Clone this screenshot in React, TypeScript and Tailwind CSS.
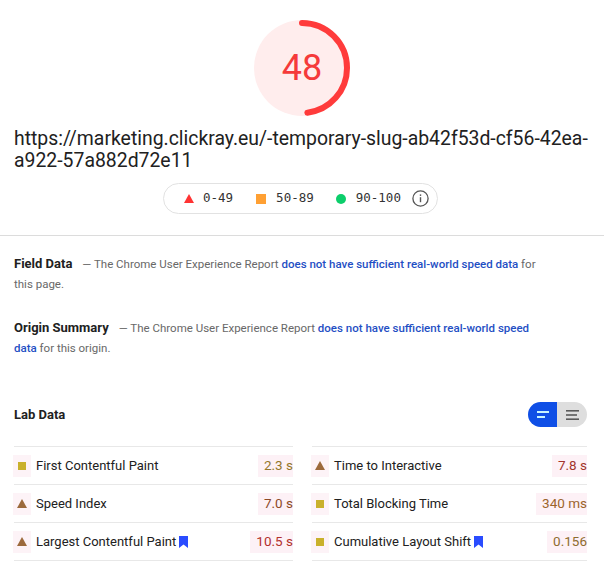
import React from 'react';

const mono = { fontFamily: '"DejaVu Sans Mono", "Liberation Mono", monospace' };

type Metric = {
    name: string;
    value: string;
    icon: 'square' | 'triangle';
    valueColor: string;
    flag?: boolean;
};

const links = 'text-[#1f4fc4] font-medium';

const Gauge: React.FC = () => {
    const r = 45;
    const c = 2 * Math.PI * r;
    const len = c * 0.48;
    return (
        <div className="relative w-[96px] h-[96px]">
            <svg width="96" height="96" viewBox="0 0 96 96">
                <circle cx="48" cy="48" r="48" fill="#ffeded" />
                <circle
                    cx="48"
                    cy="48"
                    r={r}
                    fill="none"
                    stroke="#ff3b3b"
                    strokeWidth="6"
                    strokeLinecap="round"
                    strokeDasharray={`${len} ${c}`}
                    transform="rotate(-90 48 48)"
                />
            </svg>
            <div className="absolute inset-0 flex items-center justify-center text-[36px] text-[#f53a3a]">48</div>
        </div>
    );
};

const Bookmark: React.FC = () => (
    <svg width="9" height="12" viewBox="0 0 9 12" className="ml-[3px] shrink-0">
        <path d="M0 0h9v12L4.5 8.6 0 12z" fill="#2a4cff" />
    </svg>
);

const MetricRow: React.FC<{ m: Metric }> = ({ m }) => (
    <div className="h-[38px] border-b border-[#e8e8e8] flex items-center">
        <div className="w-[18px] h-[22px] flex items-center justify-center bg-[#fdf3f7] ml-[-1px]">
            {m.icon === 'square' ? (
                <div className="w-[8px] h-[8px] bg-[#c9b12c]" />
            ) : (
                <svg width="10" height="9" viewBox="0 0 10 9">
                    <path d="M5 0L10 9H0z" fill="#9c6a3c" />
                </svg>
            )}
        </div>
        <span className="ml-[5px] text-[13px] text-[#212121]">{m.name}</span>
        {m.flag && <Bookmark />}
        <span
            className="ml-auto h-[22px] pl-[6px] flex items-center bg-[#fdf1f6] text-[13.5px]"
            style={{ color: m.valueColor }}
        >
            {m.value}
        </span>
    </div>
);

export default function App() {
    const left: Metric[] = [
        { name: 'First Contentful Paint', value: '2.3 s', icon: 'square', valueColor: '#94762c' },
        { name: 'Speed Index', value: '7.0 s', icon: 'triangle', valueColor: '#8d4a26' },
        { name: 'Largest Contentful Paint', value: '10.5 s', icon: 'triangle', valueColor: '#b2302c', flag: true },
    ];
    const right: Metric[] = [
        { name: 'Time to Interactive', value: '7.8 s', icon: 'triangle', valueColor: '#a3352c' },
        { name: 'Total Blocking Time', value: '340 ms', icon: 'square', valueColor: '#9c642c' },
        { name: 'Cumulative Layout Shift', value: '0.156', icon: 'square', valueColor: '#8e6c2e', flag: true },
    ];

    return (
        <div className="w-[604px] h-[562px] overflow-hidden bg-white" style={{ fontFamily: 'Roboto, "Noto Sans", sans-serif' }}>
            <div className="pt-[20px] flex justify-center">
                <Gauge />
            </div>
            <div className="px-[14px] mt-[12px] text-[19.4px] leading-[22px] text-[#212121]">
                https://marketing.clickray.eu/-temporary-slug-ab42f53d-cf56-42ea-a922-57a882d72e11
            </div>
            <div className="flex mt-[11px] pl-[163px]">
                <div className="flex items-center h-[31px] pl-[20px] pr-[8px] border border-[#e2e2e2] rounded-full text-[12.5px] text-[#333]" style={mono}>
                    <svg width="10" height="9" viewBox="0 0 10 9">
                        <path d="M5 0L10 9H0z" fill="#ff3333" />
                    </svg>
                    <span className="ml-[9px]">0-49</span>
                    <span className="ml-[23px] w-[10px] h-[10px] bg-[#ffa033]" />
                    <span className="ml-[10px]">50-89</span>
                    <span className="ml-[22px] w-[10px] h-[10px] rounded-full bg-[#0cce6b]" />
                    <span className="ml-[10px]">90-100</span>
                    <svg width="17" height="17" viewBox="0 0 17 17" className="ml-[11px]">
                        <circle cx="8.5" cy="8.5" r="7.6" fill="none" stroke="#555" strokeWidth="1.3" />
                        <rect x="7.8" y="7.2" width="1.4" height="5" fill="#555" />
                        <rect x="7.8" y="4.4" width="1.4" height="1.5" fill="#555" />
                    </svg>
                </div>
            </div>
            <div className="mt-[21px] border-t border-[#dcdcdc]" />

            <div className="px-[14px] pt-[18px]">
                <p className="w-[532px] text-[11.5px] leading-[20px] text-[#686868]">
                    <span className="text-[13px] font-bold text-[#212121] mr-[10px]">Field Data</span>
                    — The Chrome User Experience Report{' '}
                    <span className={links}>does not have sufficient real-world speed data</span> for this page.
                </p>
                <p className="w-[532px] mt-[24px] text-[11.5px] leading-[20px] text-[#686868]">
                    <span className="text-[13px] font-bold text-[#212121] mr-[10px]">Origin Summary</span>
                    — The Chrome User Experience Report{' '}
                    <span className={links}>does not have sufficient real-world speed data</span> for this origin.
                </p>

                <div className="flex items-center justify-between mt-[44px] pr-[3px]">
                    <span className="text-[13px] font-bold text-[#212121]">Lab Data</span>
                    <div className="flex h-[25px] rounded-full overflow-hidden">
                        <div className="w-[29px] bg-[#0f4fe6] flex items-center justify-center">
                            <svg width="12" height="7" viewBox="0 0 12 7">
                                <rect x="0" y="0" width="12" height="2" fill="#c8f4ff" />
                                <rect x="0" y="5" width="8" height="2" fill="#c8f4ff" />
                            </svg>
                        </div>
                        <div className="w-[30px] bg-[#dedede] flex items-center justify-center">
                            <svg width="13" height="10" viewBox="0 0 13 10">
                                <rect x="0" y="0" width="13" height="1.6" fill="#5a5a5a" />
                                <rect x="0" y="4.2" width="11" height="1.6" fill="#5a5a5a" />
                                <rect x="0" y="8.4" width="13" height="1.6" fill="#5a5a5a" />
                            </svg>
                        </div>
                    </div>
                </div>

                <div className="grid grid-cols-[279px_275px] gap-x-[19px] mt-[19px]">
                    <div className="border-t border-[#e8e8e8]">
                        {left.map((m) => (
                            <MetricRow key={m.name} m={m} />
                        ))}
                    </div>
                    <div className="border-t border-[#e8e8e8]">
                        {right.map((m) => (
                            <MetricRow key={m.name} m={m} />
                        ))}
                    </div>
                </div>
            </div>
        </div>
    );
}
